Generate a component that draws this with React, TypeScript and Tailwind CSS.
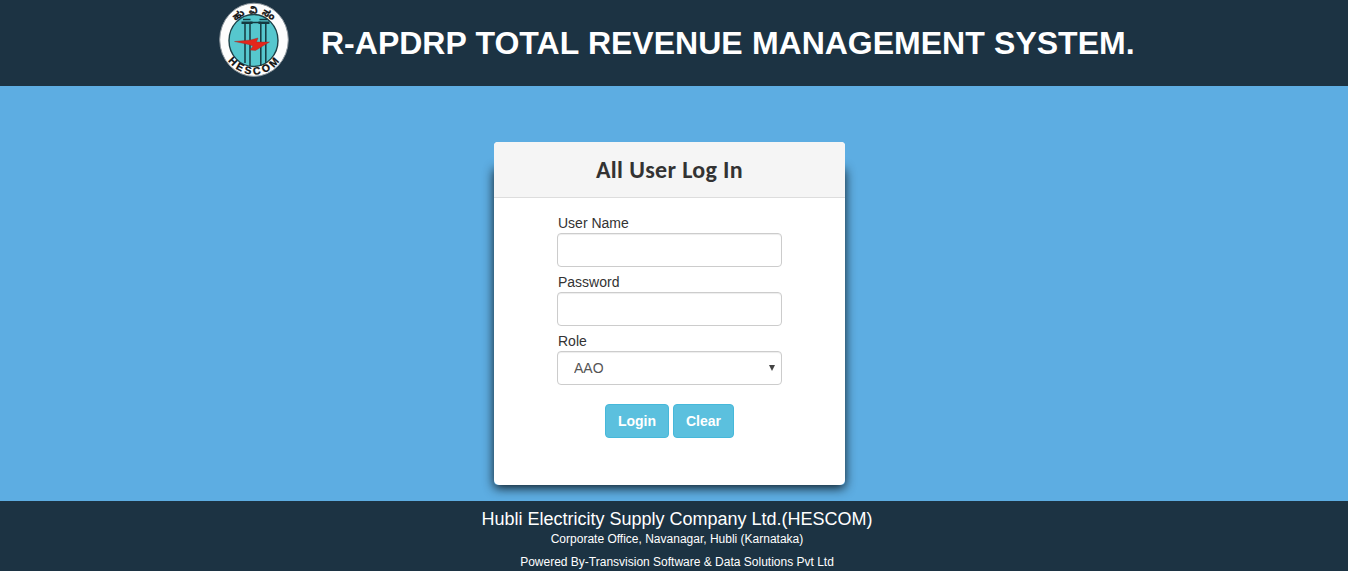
function Logo() {
  return (
    <svg viewBox="0 0 70 76" className="h-[76px] w-[70px] shrink-0" aria-label="HESCOM">
      <defs>
        <path id="ring-top" d="M10 36a25 24.5 0 0 1 50 0" />
        <path id="ring-bottom" d="M2.5 38a32.5 34.5 0 0 0 65 0" />
      </defs>
      <ellipse cx="35" cy="37.8" rx="34.3" ry="36.6" fill="#fdfdfd" stroke="#8b959c" />
      <ellipse cx="34.5" cy="38.5" rx="24.5" ry="26" fill="#56c7ce" stroke="#1d4148" strokeWidth="1.4" />
      <g stroke="#143940" fill="none">
        <path d="M26 22V61M31 22V64M41.8 22V64M46.8 22V61" strokeWidth="1.5" />
        <path d="M24 17.5h7.5M40.5 17.5h7.5M31 20.5h11" strokeWidth="1.5" />
        <path d="M22.5 20.800h11M39.5 20.800h11" strokeWidth="2.6" />
      </g>
      <path d="M15.5 39.5L31.500 38 39 36 37.500 40 50.5 40 36.5 48.500 31 48 34 44 29.500 42.500Z" fill="#e4261c" stroke="#8f2f29" strokeWidth=".4" />
      <text fontFamily='"Noto Sans Kannada", "Noto Sans", sans-serif' fontSize="9.5" fontWeight="700" fill="#111" stroke="#111" strokeWidth=".3" wordSpacing="1" textAnchor="middle">
        <textPath href="#ring-top" startOffset="50%">ಹು ವಿ ಸಂ</textPath>
      </text>
      <text fontFamily='"Liberation Sans", Arial, sans-serif' fontSize="10.5" fontWeight="700" fill="#111" stroke="#111" strokeWidth=".3" textAnchor="middle" letterSpacing="2.8">
        <textPath href="#ring-bottom" startOffset="51%">HESCOM</textPath>
      </text>
    </svg>
  );
}

const control =
  "block h-[34px] w-[225px] rounded border border-[#ccc] bg-white shadow-[inset_0_1px_1px_rgba(0,0,0,.075)] outline-none";
const button =
  "h-[34px] rounded border border-[#46b8da] bg-[#5bc0de] text-sm font-bold text-white";

export default function App() {
  return (
    <div className="flex h-[571px] flex-col overflow-hidden bg-[#5dade2] font-['Liberation_Sans',Arial,sans-serif] text-[#333]">
      <header className="flex h-[86px] shrink-0 items-start bg-[#1c3343] pt-[2px] pl-[219px]">
        <Logo />
        <h1 className="mt-[21px] ml-[32px] text-[32px] leading-10 font-bold whitespace-nowrap text-white [word-spacing:.4px]">
          R-APDRP TOTAL REVENUE MANAGEMENT SYSTEM.
        </h1>
      </header>
      <main className="h-[415px] shrink-0 pt-14 pl-[494px]">
        <section className="relative isolate h-[343px] w-[351px]">
          <div className="absolute inset-x-0 top-[24px] bottom-0 -z-10 rounded shadow-[0_3px_11px_rgba(0,0,0,.85)]" />
          <div className="flex h-full flex-col overflow-hidden rounded-t rounded-b-[5px] bg-white">
            <h2 className="h-14 shrink-0 border-b border-[#ddd] bg-[#f5f5f5] text-center font-[Carlito,Lato,sans-serif] text-[24px] leading-[55px] font-bold tracking-[.35px]">
              All User Log In
            </h2>
            <form className="flex flex-col pt-[15px] pl-[63px] text-sm leading-5">
              <label htmlFor="user" className="pl-px">User Name</label>
              <input id="user" className={control} />
              <label htmlFor="password" className="mt-[5px] pl-px">Password</label>
              <input id="password" type="password" className={control} />
              <label htmlFor="role" className="mt-[5px] pl-px">Role</label>
              <div className={control}>
                <div className="flex h-full items-center justify-between pr-[6px] pl-4 text-[#555]">
                  <select id="role" className="grow appearance-none outline-none">
                    <option>AAO</option>
                  </select>
                  <svg viewBox="0 0 6 6" className="size-[6px]"><path d="M0 0h6L3 6z" fill="#444" /></svg>
                </div>
              </div>
              <div className="mt-[19px] ml-[48px] flex gap-1">
                <button type="button" className={button + " w-[64px]"}>Login</button>
                <button type="button" className={button + " w-[61px]"}>Clear</button>
              </div>
            </form>
          </div>
        </section>
      </main>
      <footer className="h-[70px] shrink-0 bg-[#1c3343] pl-[6px] text-center text-white">
        <p className="pt-2 text-lg leading-5">Hubli Electricity Supply Company Ltd.(HESCOM)</p>
        <p className="text-xs leading-[20px]">Corporate Office, Navanagar, Hubli (Karnataka)</p>
        <p className="mt-[3px] text-xs leading-5">Powered By-Transvision Software &amp; Data Solutions Pvt Ltd</p>
      </footer>
    </div>
  );
}
